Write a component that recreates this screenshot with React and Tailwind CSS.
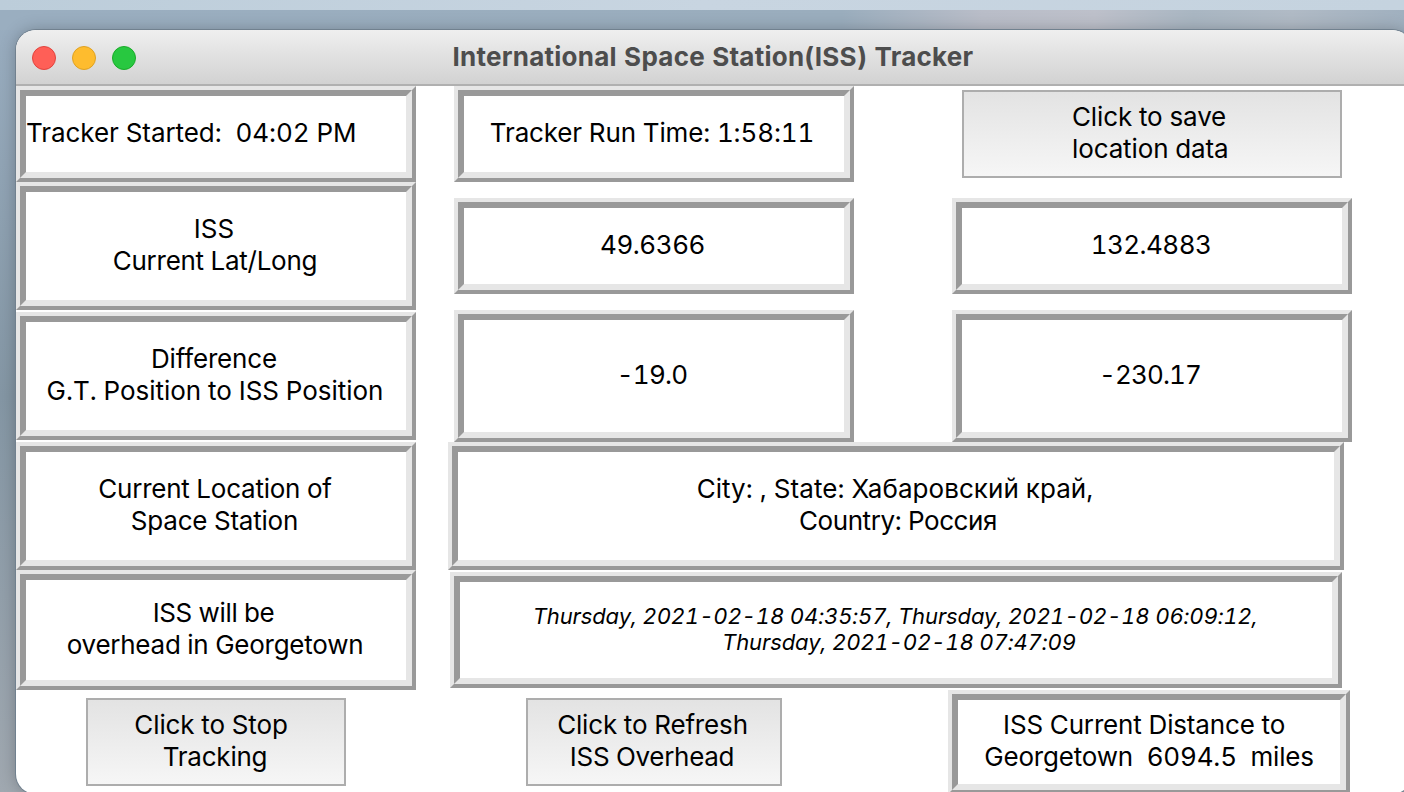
const FACE = "flex h-full w-full items-center justify-center border-6 border-t-[#999999] border-l-[#999999] border-r-[#e6e6e6] border-b-[#e6e6e6] bg-white pb-0.5";

function Ridge({ className = "", inner = "pr-0.5", children }) {
  return (
    <div className={`shrink-0 border-4 border-t-[#e6e6e6] border-l-[#e6e6e6] border-r-[#999999] border-b-[#999999] ${className}`}>
      <div className={`${FACE} ${inner}`}>{children}</div>
    </div>
  );
}

function Line({ className = "tracking-[-0.22px]", children }) {
  return <div className={`w-fit whitespace-pre ${className}`}>{children}</div>;
}

function PushButton({ className = "", children }) {
  return (
    <button className={`flex h-[88px] shrink-0 flex-col justify-center border-2 border-[#adadad] bg-linear-to-b from-[#e3e3e3] to-[#f6f6f6] pb-0.5 ${className}`}>
      {children}
    </button>
  );
}

function Stack({ children }) {
  return <div className="flex flex-col items-center">{children}</div>;
}

export default function App() {
  return (
    <div className="flex h-[792px] w-[1404px] flex-col overflow-hidden bg-linear-to-b from-[#9aaec1] via-[#8496a4] to-[#a0a8b0] font-['Inter',sans-serif] text-[26px] leading-8 text-black tabular-nums">
      <div className="h-2.5 shrink-0 bg-linear-to-r from-[#bccdda] via-[#c8d5e1] to-[#c5d3df]" />
      <div className="h-5 shrink-0 bg-[linear-gradient(90deg,#9aaec0_0%,#9aadbd_60%,#b9bdc8_70%,#bdc0ca_78%,#a9b6c2_85%,#b0bac5_92%,#a0b0bf_100%)]" />
      <div className="ml-4 h-[764px] w-[1396px] shrink-0 overflow-hidden rounded-[20px] bg-white shadow-[0_0_0_1px_#71818f,0_0_16px_#00000040]">
        <header className="flex h-14 items-center border-b-2 border-[#b0b0b0] bg-linear-to-b from-[#efefef] to-[#d2d2d2] pl-4">
          <div className="flex gap-4 pt-0.5">
            <span className="size-6 rounded-full border border-[#e0443e] bg-[#ff5f57]" />
            <span className="size-6 rounded-full border border-[#dea123] bg-[#febc2e]" />
            <span className="size-6 rounded-full border border-[#1aab29] bg-[#28c840]" />
          </div>
          <h1 className="ml-[316.5px] whitespace-pre font-bold tracking-[0.25px] text-[#4d4d4d]">International Space Station(ISS) Tracker</h1>
        </header>
        <main className="flex">
          <section className="flex w-[400px] shrink-0 flex-col">
            <Ridge className="h-24" inner="justify-start!"><Line className="tracking-[-0.06px]">{"Tracker Started:  04:02 PM"}</Line></Ridge>
            <Ridge className="h-32"><Stack><Line className="-translate-x-px">ISS</Line><Line className="tracking-[-0.27px]">Current Lat/Long</Line></Stack></Ridge>
            <Ridge className="mt-0.5 h-32"><Stack><Line className="-translate-x-px tracking-[-0.15px]">Difference</Line><Line className="tracking-[-0.04px]">G.T. Position to ISS Position</Line></Stack></Ridge>
            <Ridge className="mt-0.5 h-32"><Stack><Line className="tracking-[-0.24px]">Current Location of</Line><Line className="-translate-x-[0.5px] tracking-[-0.22px]">Space Station</Line></Stack></Ridge>
            <Ridge className="h-[120px]"><Stack><Line className="-translate-x-[1.5px] tracking-[-0.35px]">ISS will be</Line><Line className="tracking-[-0.25px]">overhead in Georgetown</Line></Stack></Ridge>
            <PushButton className="mt-2 ml-[70px] w-[260px] items-center pr-0.5"><Line className="-translate-x-[0.5px] tracking-[-0.12px]">{"Click to Stop "}</Line><Line>Tracking</Line></PushButton>
          </section>
          <section className="flex flex-col">
            <div className="flex h-28 items-start pl-[38px]">
              <Ridge className="h-24 w-[400px]"><Line className="-translate-x-px tracking-[-0.14px]">Tracker Run Time: 1:58:11</Line></Ridge>
              <PushButton className="mt-1 ml-[108px] w-[380px] items-start pl-[108px]"><Line className="tracking-[-0.12px]">Click to save</Line><Line className="tracking-[-0.12px]">location data</Line></PushButton>
            </div>
            <div className="flex h-28 gap-[98px] pl-[38px]">
              <Ridge className="h-24 w-[400px]"><Line className="-translate-x-[0.5px] tracking-[-0.45px]">49.6366</Line></Ridge>
              <Ridge className="h-24 w-[400px]"><Line className="tracking-[-0.55px]">132.4883</Line></Ridge>
            </div>
            <div className="flex gap-[98px] pl-[38px]">
              <Ridge className="h-[132px] w-[400px]"><Line className="-translate-x-px tracking-[-0.8px]">-19.0</Line></Ridge>
              <Ridge className="h-[132px] w-[400px]"><Line className="-translate-x-px tracking-[-0.9px]">-230.17</Line></Ridge>
            </div>
            <Ridge className="ml-8 h-32 w-[896px]" inner=""><Stack><Line className="translate-x-[2.5px] tracking-[0.05px]">{"City: , State: Хабаровский край, "}</Line><Line className="translate-x-[2px] tracking-[-0.4px]">Country: Россия</Line></Stack></Ridge>
            <Ridge className="mt-0.5 ml-[34px] h-[116px] w-[892px]" inner="text-[22px] leading-[26px] italic"><Stack><Line className="translate-x-[2px] tracking-[-0.11px]">{"Thursday, 2021-02-18 04:35:57, Thursday, 2021-02-18 06:09:12, "}</Line><Line className="translate-x-[3px] tracking-[-0.11px]">Thursday, 2021-02-18 07:47:09</Line></Stack></Ridge>
            <div className="mt-0.5 flex items-start pl-[110px]">
              <PushButton className="mt-2 w-64 items-center pr-0.5"><Line className="-translate-x-[0.5px] tracking-[-0.16px]">Click to Refresh</Line><Line className="-translate-x-px tracking-[-0.3px]">ISS Overhead</Line></PushButton>
              <Ridge className="ml-[166px] h-[104px] w-[402px]" inner=""><Stack><Line className="-translate-x-[1.5px] tracking-[-0.15px]">{"ISS Current Distance to "}</Line><Line className="tracking-[-0.18px]">{"Georgetown  6094.5  miles"}</Line></Stack></Ridge>
            </div>
          </section>
        </main>
      </div>
    </div>
  );
}
